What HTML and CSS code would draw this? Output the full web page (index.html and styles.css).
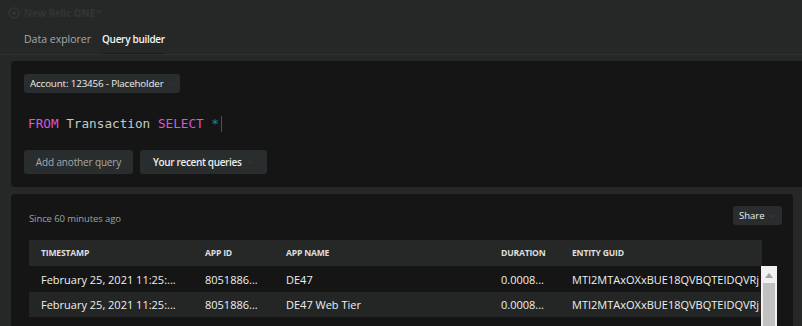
FILE: index.html
```html
<!DOCTYPE html>
<html>
<head>
<meta charset="utf-8">
<link rel="stylesheet" href="styles.css">
</head>
<body>
<div class="app">
  <div class="brand">
    <svg class="brand-logo" width="12" height="12" viewBox="0 0 12 12"><circle cx="6" cy="6" r="5" fill="none" stroke="#313434" stroke-width="1.6"/><circle cx="6" cy="6" r="2" fill="#313434"/></svg>
    <span class="brand-text">New Relic <b>ONE</b>™</span>
  </div>
  <nav class="tabs">
    <span class="tab">Data explorer</span>
    <span class="tab active">Query builder</span>
  </nav>
  <div class="content">
    <section class="panel query-panel">
      <button class="btn btn-account">Account: 123456 - Placeholder <svg class="chev" width="8" height="6" viewBox="0 0 8 6"><path d="M1 1.5 L4 4.5 L7 1.5" fill="none" stroke="#363939" stroke-width="1.2"/></svg></button>
      <div class="editor"><span class="kw">FROM</span> Transaction <span class="kw">SELECT</span> <span class="star">*</span><span class="cursor"></span></div>
      <div class="actions">
        <button class="btn btn-lg muted">Add another query</button>
        <button class="btn btn-lg strong">Your recent queries <svg class="chev" width="8" height="6" viewBox="0 0 8 6"><path d="M1 1.5 L4 4.5 L7 1.5" fill="none" stroke="#363939" stroke-width="1.2"/></svg></button>
      </div>
    </section>
    <section class="panel results-panel">
      <div class="results-head">
        <span class="since">Since 60 minutes ago</span>
        <button class="btn btn-share">Share <svg class="chev" width="8" height="6" viewBox="0 0 8 6"><path d="M1 1.5 L4 4.5 L7 1.5" fill="none" stroke="#363939" stroke-width="1.2"/></svg></button>
      </div>
      <div class="table">
        <div class="thead row">
          <span>TIMESTAMP</span><span>APP ID</span><span>APP NAME</span><span>DURATION</span><span>ENTITY GUID</span>
        </div>
        <div class="tbody-wrap">
          <div class="tbody">
            <div class="row">
              <span>February 25, 2021 11:25:...</span><span>8051886...</span><span>DE47</span><span>0.0008...</span><span class="clip">MTI2MTAxOXxBUE18QVBQTEIDQVRj</span>
            </div>
            <div class="row alt">
              <span>February 25, 2021 11:25:...</span><span>8051886...</span><span>DE47 Web Tier</span><span>0.0008...</span><span class="clip">MTI2MTAxOXxBUE18QVBQTEIDQVRj</span>
            </div>
          </div>
          <div class="vscroll">
            <svg class="arrow" width="8" height="5" viewBox="0 0 8 5"><path d="M0 5 L4 0 L8 5 Z" fill="#a3a3a3"/></svg>
            <div class="thumb"></div>
          </div>
        </div>
      </div>
    </section>
  </div>
</div>
</body>
</html>
```

FILE: styles.css
```css
* { box-sizing: border-box; }
html, body {
  margin: 0;
  padding: 0;
  background: #262828;
  height: 100%;
  overflow: hidden;
}
body {
  font-family: "Open Sans", "Liberation Sans", sans-serif;
  color: #e4e6e6;
}
.app {
  display: flex;
  flex-direction: column;
  height: 326px;
}
.brand {
  display: flex;
  align-items: center;
  gap: 4px;
  height: 24px;
  padding-left: 8px;
  padding-top: 1px;
}
.brand-text {
  font-size: 10px;
  font-weight: 700;
  color: #313434;
  letter-spacing: -0.2px;
}
.brand-text b { font-weight: 800; }
.tabs {
  display: flex;
  gap: 11px;
  padding-left: 24px;
  height: 31px;
  border-bottom: 1px solid #2d3030;
}
.tab {
  font-size: 10.5px;
  color: #a6aaaa;
  line-height: 30px;
  white-space: nowrap;
  border-bottom: 1px solid transparent;
}
.tab.active {
  color: #f4f6f6;
  font-weight: 600;
  font-size: 10px;
  letter-spacing: -0.3px;
  border-bottom-color: #1b1d1d;
}
.content {
  flex: 1;
  display: flex;
  flex-direction: column;
  gap: 7px;
  padding: 6px 0 0 11px;
  min-height: 0;
}
.panel {
  background: #151515;
  border-radius: 4px 0 0 4px;
}
.query-panel {
  height: 127px;
  padding: 13px 0 0 13px;
  display: flex;
  flex-direction: column;
  align-items: flex-start;
}
.btn {
  font-family: "Open Sans", "Liberation Sans", sans-serif;
  background: #2a2d2d;
  border: none;
  border-radius: 3px;
  color: #eceeee;
  display: inline-flex;
  align-items: center;
  gap: 6px;
  padding: 0;
  white-space: nowrap;
  cursor: pointer;
}
.btn-account {
  height: 19px;
  font-size: 9.8px;
  padding: 0 6px 0 6px;
  width: 156px;
  gap: 5px;
  letter-spacing: -0.15px;
}
.editor {
  margin-top: 22px;
  margin-left: 4px;
  font-family: "DejaVu Sans Mono", "Liberation Mono", monospace;
  font-size: 12.7px;
  color: #c4c8c8;
  height: 17px;
  line-height: 17px;
  white-space: pre;
}
.kw { color: #d856d8; }
.star { color: #1d8b8b; }
.cursor {
  display: inline-block;
  width: 1px;
  height: 16px;
  background: #4d5252;
  margin-left: 2px;
  vertical-align: -4px;
}
.actions {
  margin-top: 18px;
  display: flex;
  gap: 7px;
}
.btn-lg {
  height: 24px;
  font-size: 10px;
  padding: 0 13px;
  letter-spacing: -0.15px;
}
.btn-lg.muted { color: #a7abab; width: 109px; justify-content: center; padding: 0; }
.btn-lg.strong { width: 127px; padding-left: 13px; font-weight: 600; letter-spacing: -0.35px; }
.results-panel {
  flex: 1;
  margin-right: 9px;
  border-radius: 4px 4px 0 0;
  padding: 12px 11px 0 18px;
  display: flex;
  flex-direction: column;
}
.results-head {
  display: flex;
  justify-content: space-between;
  align-items: center;
  height: 19px;
}
.since {
  font-size: 9.5px;
  color: #9ea2a2;
  margin-top: 5px;
  letter-spacing: -0.1px;
}
.btn-share {
  height: 19px;
  width: 49px;
  font-size: 9.5px;
  padding: 0 6px;
  gap: 4px;
}
.table {
  margin-top: 15px;
  width: 749px;
}
.row {
  display: grid;
  grid-template-columns: 164px 81px 215px 71px 1fr;
  align-items: center;
  height: 26px;
  font-size: 11px;
  color: #eef0f0;
}
.row span {
  padding-left: 12px;
  white-space: nowrap;
  overflow: hidden;
}
.thead {
  width: 733px;
  background: #262828;
  font-size: 8.6px;
  font-weight: 700;
  color: #dcdfdf;
  letter-spacing: -0.2px;
}
.tbody-wrap {
  display: flex;
}
.tbody {
  width: 732px;
}
.tbody .row { height: 26px; }
.tbody .row.alt { background: #242626; height: 25px; }
.vscroll {
  width: 16px;
  background: #f1f1f1;
  display: flex;
  flex-direction: column;
  align-items: center;
  height: 60px;
}
.arrow {
  margin-top: 7px;
}
.thumb {
  margin-top: 5px;
  width: 12px;
  flex: 1;
  background: #c1c1c1;
}
```
